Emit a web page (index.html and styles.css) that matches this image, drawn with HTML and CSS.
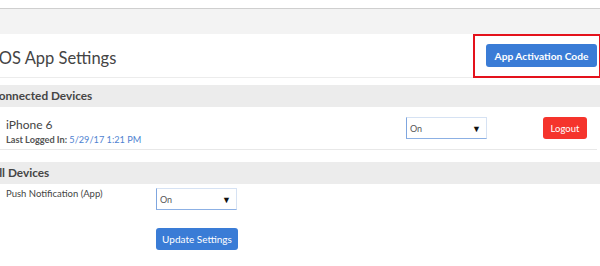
FILE: index.html
```html
<!DOCTYPE html>
<html>
<head>
<meta charset="utf-8">
<link rel="stylesheet" href="styles.css">
</head>
<body>
<div class="topbar"></div>
<div class="page">
  <header class="head">
    <h1 class="title">iOS App Settings</h1>
    <button class="btn btn-blue btn-code">App Activation Code</button>
  </header>
  <section class="section">
    <h2 class="band">Connected Devices</h2>
    <div class="device">
      <div class="dev-info">
        <div class="dev-name">iPhone 6</div>
        <div class="dev-meta">Last Logged In: <span class="date">5/29/17 1:21 PM</span></div>
      </div>
      <div class="select sel-device"><span>On</span><span class="caret">▼</span></div>
      <button class="btn btn-red">Logout</button>
    </div>
  </section>
  <section class="section all">
    <h2 class="band">All Devices</h2>
    <div class="setting">
      <div class="label">Push Notification (App)</div>
      <div class="select sel-push"><span>On</span><span class="caret">▼</span></div>
    </div>
    <div class="actions">
      <button class="btn btn-blue btn-update">Update Settings</button>
    </div>
  </section>
  <div class="highlight"></div>
</div>
</body>
</html>
```

FILE: styles.css
```css
* { box-sizing: border-box; }
html, body { margin: 0; padding: 0; background: #fff; }
body {
  font-family: Lato, "Open Sans", sans-serif;
  color: #444;
  width: 600px;
  height: 266px;
  overflow: hidden;
}
.topbar {
  margin-top: 8px;
  height: 26px;
  border-top: 1px solid #cfcfcf;
  background: #f3f3f3;
}
.page {
  position: relative;
  margin-left: -9px;
}
.head {
  height: 44px;
  margin-right: 3px;
  display: flex;
  align-items: center;
  justify-content: space-between;
  border-bottom: 1px solid #ececec;
}
.title {
  margin: 0 0 0 4px;
  padding-top: 5px;
  font-size: 16.5px;
  font-weight: 400;
  color: #444;
}
.btn {
  font-family: Lato, "Open Sans", sans-serif;
  border: none;
  border-radius: 3px;
  color: #fff;
  cursor: pointer;
  padding: 0;
}
.btn-blue { background: #3a7cd6; }
.btn-code {
  width: 111px;
  height: 23px;
  font-size: 10.2px;
  font-weight: 700;
}
.section { margin-top: 7px; }
.section.all { margin-top: 12px; }
.band {
  margin: 0;
  height: 22px;
  line-height: 22px;
  background: #ececec;
  font-size: 11.8px;
  font-weight: 700;
  color: #454545;
  padding-left: 0;
}
.device {
  height: 43px;
  margin-right: 3px;
  border-bottom: 1px solid #e8e8e8;
  display: flex;
  align-items: center;
  padding-left: 15px;
}
.dev-info { flex: 1; padding-top: 5px; }
.dev-name { font-size: 12px; color: #444; line-height: 16px; }
.dev-meta { font-size: 9.2px; color: #555; margin-top: 1px; font-weight: 700; }
.date { color: #4f82d1; font-weight: 400; }
.select {
  width: 81px;
  height: 22px;
  border: 1px solid #d6e2f3;
  border-left-color: #7fa6df;
  border-bottom-color: #8cb0e4;
  display: flex;
  align-items: center;
  justify-content: space-between;
  padding: 0 5px 0 3px;
  font-size: 9px;
  color: #555;
  background: #fff;
}
.caret { font-size: 9px; color: #111; }
.sel-device { margin-right: 56px; }
.btn-red {
  background: #f5342c;
  width: 44px;
  height: 22px;
  font-size: 9.5px;
  margin-right: 10px;
}
.setting {
  display: flex;
  align-items: flex-start;
  padding-left: 15px;
  height: 43px;
}
.label {
  width: 150px;
  font-size: 9.5px;
  color: #444;
  padding-top: 4px;
}
.sel-push { margin-top: 4px; }
.actions { padding-left: 165px; }
.btn-update {
  width: 82px;
  height: 22px;
  font-size: 10px;
}
.highlight {
  position: absolute;
  left: 482px;
  top: 0;
  width: 128px;
  height: 44px;
  border: 2px solid #e4121c;
}
```
